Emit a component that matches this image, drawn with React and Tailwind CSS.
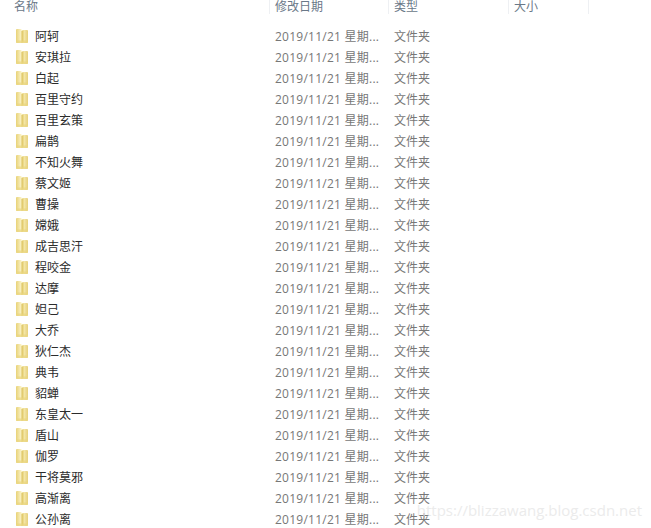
import React from 'react';

const NAMES = [
    '阿轲', '安琪拉', '白起', '百里守约', '百里玄策', '扁鹊', '不知火舞', '蔡文姬',
    '曹操', '嫦娥', '成吉思汗', '程咬金', '达摩', '妲己', '大乔', '狄仁杰',
    '典韦', '貂蝉', '东皇太一', '盾山', '伽罗', '干将莫邪', '高渐离', '公孙离',
];

const FolderIcon = () => (
    <svg width="14" height="16" viewBox="0 0 14 16" className="mb-[1px] shrink-0">
        <defs>
            <linearGradient id="folderBack" x1="0" y1="0" x2="1" y2="0">
                <stop offset="0" stopColor="#e8d277" />
                <stop offset="0.45" stopColor="#fbf4cb" />
                <stop offset="1" stopColor="#e6d07a" />
            </linearGradient>
            <linearGradient id="folderFront" x1="0" y1="0" x2="1" y2="0">
                <stop offset="0" stopColor="#d9bd55" />
                <stop offset="1" stopColor="#f5e8a4" />
            </linearGradient>
        </defs>
        <path d="M1 2 Q1 1 2 1 L6 1 L7 2 L12 2 Q13 2 13 3 L13 14 Q13 15 12 15 L2 15 Q1 15 1 14 Z" fill="url(#folderBack)" />
        <path d="M6.5 3 L9.5 2 L9.5 14 L6.5 15 Z" fill="url(#folderFront)" />
        <path d="M1 12.5 L1 14 Q1 15 2 15 L12 15 Q13 15 13 14 L13 12.5 Z" fill="#e9d67f" opacity="0.7" />
    </svg>
);

const HeaderCell = ({ label, className }) => (
    <div className={`flex h-[14px] items-center border-r border-[#eef0f3] ${className}`}>
        <span>{label}</span>
    </div>
);

const Row = ({ name }) => (
    <div className="flex h-[21px] items-center text-[12px] leading-[19px]">
        <div className="flex w-[275px] items-center pl-[15px]">
            <FolderIcon />
            <span className="ml-[6px] text-[#2b2b2b]">{name}</span>
        </div>
        <div className="w-[119px] tracking-[0.25px] text-[#777777]">2019/11/21 星期...</div>
        <div className="text-[#777777]">文件夹</div>
    </div>
);

export default function App() {
    return (
        <div
            className="relative h-[528px] w-[651px] overflow-hidden bg-white"
            style={{ fontFamily: '"Open Sans", "Noto Sans CJK SC", sans-serif' }}
        >
            <div className="flex h-[13px] items-start text-[12px] leading-[14px] text-[#6a7888]">
                <HeaderCell label="名称" className="w-[270px] pl-[14px]" />
                <HeaderCell label="修改日期" className="w-[119px] pl-[5px]" />
                <HeaderCell label="类型" className="w-[120px] pl-[5px]" />
                <HeaderCell label="大小" className="w-[80px] pl-[5px]" />
            </div>
            <div className="pt-[13px]">
                {NAMES.map((name) => (
                    <Row key={name} name={name} />
                ))}
            </div>
            <div className="absolute right-[9px] top-[500px] text-[15px] leading-[20px] text-[#e6e6e6]/80">
                https://blizzawang.blog.csdn.net
            </div>
        </div>
    );
}
